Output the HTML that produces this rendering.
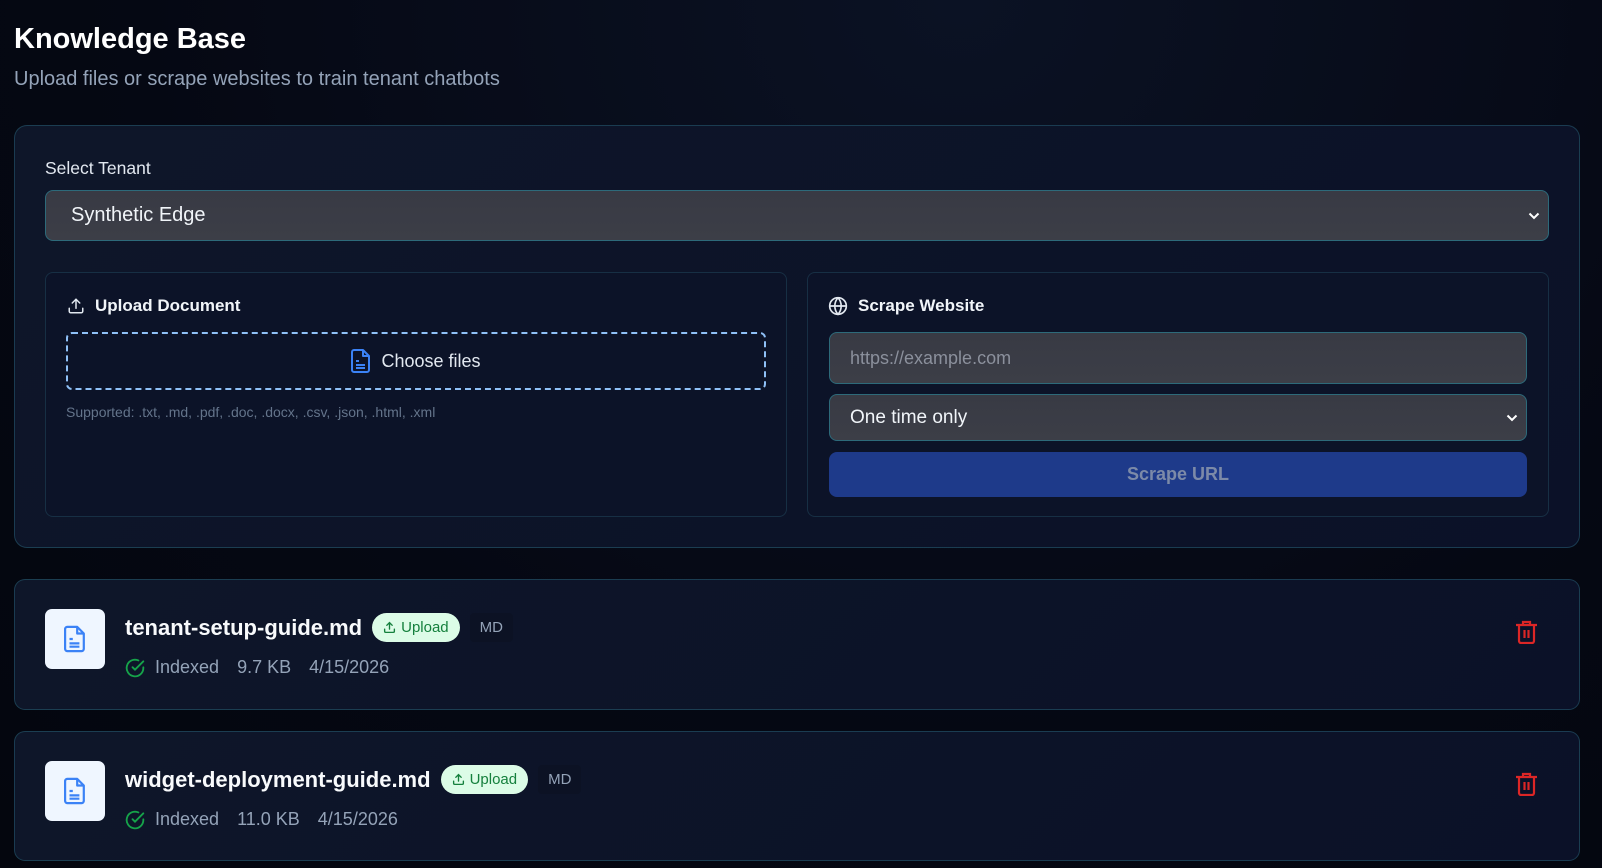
<!DOCTYPE html>
<html><head><meta charset="utf-8"><style>
*{box-sizing:border-box;margin:0;padding:0}
body{width:1602px;height:868px;overflow:hidden;background:radial-gradient(ellipse at 60% 0%,#0b1224 0%,#050813 60%,#04060e 100%);font-family:"Liberation Sans",sans-serif;color:#f1f5f9;position:relative}
.abs{position:absolute}
.card{position:absolute;background:linear-gradient(135deg,#0e1629,#0b1128);border:1px solid rgba(45,110,130,.45);border-radius:13px}
.inner{position:absolute;background:#0c1328;border:1px solid rgba(45,100,120,.35);border-radius:8px}
.field{position:absolute;background:linear-gradient(180deg,#383a44,#3c3e47);border:1px solid #2d6a7a;border-radius:8px;font-size:19px;color:#f1f5f9;padding-left:20px;display:flex;align-items:center}
.chev{position:absolute;right:8px;top:50%;margin-top:-4px}
h3{position:absolute;font-size:17px;font-weight:bold;color:#f1f5f9;display:flex;align-items:center;gap:10px}
.fname{font-size:22px;font-weight:bold;color:#f8fafc}
.badge{display:inline-flex;align-items:center;gap:5px;background:#dcfce7;color:#15803d;font-size:15px;border-radius:15px;height:29px;padding:0 11px}
.md{display:inline-flex;align-items:center;background:#0c1224;color:#94a3b8;font-size:15px;height:29px;padding:0 10px;border-radius:4px}
.meta{font-size:18px;color:#94a3b8;display:flex;align-items:center}
</style></head><body>
<div class="abs" style="left:14px;top:23px;font-size:29px;font-weight:bold;color:#fff">Knowledge Base</div>
<div class="abs" style="left:14px;top:68px;font-size:20px;color:#94a3b8">Upload files or scrape websites to train tenant chatbots</div>

<div class="card" style="left:14px;top:125px;width:1566px;height:423px"></div>
<div class="abs" style="left:45px;top:158px;font-size:17.5px;color:#e2e8f0">Select Tenant</div>
<div class="field" style="left:45px;top:190px;width:1504px;height:51px;padding-left:25px;font-size:20px">Synthetic Edge
<svg class="chev" width="12" height="8" viewBox="0 0 12 8"><path d="M1.5 1.5L6 6l4.5-4.5" stroke="#fff" stroke-width="2" fill="none"/></svg></div>

<div class="inner" style="left:45px;top:272px;width:742px;height:245px"></div>
<h3 style="left:67px;top:296px"><svg width="18" height="18" viewBox="0 0 24 24" fill="none" stroke="#e2e8f0" stroke-width="2" stroke-linecap="round" stroke-linejoin="round"><path d="M21 15v4a2 2 0 0 1-2 2H5a2 2 0 0 1-2-2v-4"/><path d="M17 8l-5-5-5 5"/><path d="M12 3v12"/></svg>Upload Document</h3>
<div class="abs" style="left:66px;top:332px;width:700px;height:58px;border:2px dashed #8fc0f7;border-radius:6px;display:flex;align-items:center;justify-content:center;gap:10px;font-size:18px;color:#e2e8f0">
<svg width="20" height="24" viewBox="0 0 20 24" fill="none" stroke="#3b82f6" stroke-width="2" stroke-linejoin="round"><path d="M3 1h9l6 6v14a2 2 0 0 1-2 2H3a2 2 0 0 1-2-2V3a2 2 0 0 1 2-2z"/><path d="M12 1v6h6"/><path d="M5 12h3M5 16h9M5 19h9"/></svg>Choose files</div>
<div class="abs" style="left:66px;top:404px;font-size:14px;color:#64748b">Supported: .txt, .md, .pdf, .doc, .docx, .csv, .json, .html, .xml</div>

<div class="inner" style="left:807px;top:272px;width:742px;height:245px"></div>
<h3 style="left:828px;top:296px"><svg width="20" height="20" viewBox="0 0 24 24" fill="none" stroke="#e2e8f0" stroke-width="2"><circle cx="12" cy="12" r="10"/><path d="M2 12h20"/><path d="M12 2a15 15 0 0 1 0 20a15 15 0 0 1 0-20"/></svg>Scrape Website</h3>
<div class="field" style="left:829px;top:332px;width:698px;height:52px;color:#8b909c;font-size:18px">https://example.com</div>
<div class="field" style="left:829px;top:394px;width:698px;height:47px;font-size:19px">One time only
<svg class="chev" width="12" height="8" viewBox="0 0 12 8"><path d="M1.5 1.5L6 6l4.5-4.5" stroke="#fff" stroke-width="2" fill="none"/></svg></div>
<div class="abs" style="left:829px;top:452px;width:698px;height:45px;background:#1e3a8a;border-radius:8px;display:flex;align-items:center;justify-content:center;font-size:18px;font-weight:bold;color:#7c8aa8">Scrape URL</div>

<div class="card" style="left:14px;top:579px;width:1566px;height:131px;border-radius:11px"></div>
<div class="abs" style="left:45px;top:609px;width:60px;height:60px;background:#eff6ff;border-radius:7px;display:flex;align-items:center;justify-content:center">
<svg width="22" height="28" viewBox="0 0 20 24" fill="none" stroke="#3b82f6" stroke-width="2" stroke-linejoin="round"><path d="M3 1h9l6 6v14a2 2 0 0 1-2 2H3a2 2 0 0 1-2-2V3a2 2 0 0 1 2-2z"/><path d="M12 1v6h6"/><path d="M5 12h3M5 16h9M5 19h9"/></svg></div>
<div class="abs" style="left:125px;top:613px;display:flex;align-items:center;gap:10px"><span class="fname">tenant-setup-guide.md</span><span class="badge"><svg width="13" height="13" viewBox="0 0 24 24" fill="none" stroke="#15803d" stroke-width="2.5" stroke-linecap="round"><path d="M21 15v4a2 2 0 0 1-2 2H5a2 2 0 0 1-2-2v-4"/><path d="M17 8l-5-5-5 5M12 3v12"/></svg>Upload</span><span class="md">MD</span></div>
<div class="abs meta" style="left:125px;top:657px"><svg width="20" height="20" viewBox="0 0 24 24" fill="none" stroke="#16a34a" stroke-width="2.2" stroke-linecap="round"><path d="M22 11.1V12a10 10 0 1 1-5.9-9.1"/><path d="M22 4L12 14l-3-3"/></svg><span style="margin-left:10px">Indexed</span><span style="margin-left:18px">9.7 KB</span><span style="margin-left:18px">4/15/2026</span></div>
<svg class="abs" style="left:1515px;top:620px" width="23" height="24" viewBox="0 0 23 24" fill="none" stroke="#dc2626" stroke-width="2.2"><path d="M1 5h21"/><path d="M8 5V2h7v3"/><path d="M4 5v16a2 2 0 0 0 2 2h11a2 2 0 0 0 2-2V5"/><path d="M9.5 10v8M13.5 10v8"/></svg>

<div class="card" style="left:14px;top:731px;width:1566px;height:130px;border-radius:11px"></div>
<div class="abs" style="left:45px;top:761px;width:60px;height:60px;background:#eff6ff;border-radius:7px;display:flex;align-items:center;justify-content:center">
<svg width="22" height="28" viewBox="0 0 20 24" fill="none" stroke="#3b82f6" stroke-width="2" stroke-linejoin="round"><path d="M3 1h9l6 6v14a2 2 0 0 1-2 2H3a2 2 0 0 1-2-2V3a2 2 0 0 1 2-2z"/><path d="M12 1v6h6"/><path d="M5 12h3M5 16h9M5 19h9"/></svg></div>
<div class="abs" style="left:125px;top:765px;display:flex;align-items:center;gap:10px"><span class="fname">widget-deployment-guide.md</span><span class="badge"><svg width="13" height="13" viewBox="0 0 24 24" fill="none" stroke="#15803d" stroke-width="2.5" stroke-linecap="round"><path d="M21 15v4a2 2 0 0 1-2 2H5a2 2 0 0 1-2-2v-4"/><path d="M17 8l-5-5-5 5M12 3v12"/></svg>Upload</span><span class="md">MD</span></div>
<div class="abs meta" style="left:125px;top:809px"><svg width="20" height="20" viewBox="0 0 24 24" fill="none" stroke="#16a34a" stroke-width="2.2" stroke-linecap="round"><path d="M22 11.1V12a10 10 0 1 1-5.9-9.1"/><path d="M22 4L12 14l-3-3"/></svg><span style="margin-left:10px">Indexed</span><span style="margin-left:18px">11.0 KB</span><span style="margin-left:18px">4/15/2026</span></div>
<svg class="abs" style="left:1515px;top:772px" width="23" height="24" viewBox="0 0 23 24" fill="none" stroke="#dc2626" stroke-width="2.2"><path d="M1 5h21"/><path d="M8 5V2h7v3"/><path d="M4 5v16a2 2 0 0 0 2 2h11a2 2 0 0 0 2-2V5"/><path d="M9.5 10v8M13.5 10v8"/></svg>
</body></html>
